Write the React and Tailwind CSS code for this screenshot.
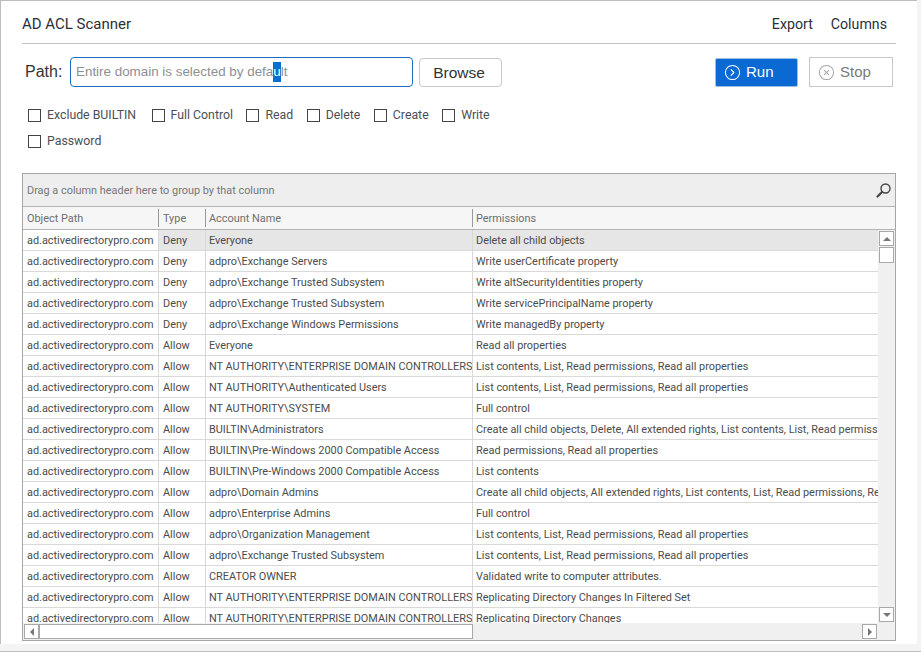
import React from 'react';
import { CircleChevronRight, CircleX } from 'lucide-react';

const ENT = 'NT AUTHORITY\\ENTERPRISE DOMAIN CONTROLLERS';
const STD = 'List contents, List, Read permissions, Read all properties';

const rows = [
  ['Deny', 'Everyone', 'Delete all child objects'],
  ['Deny', 'adpro\\Exchange Servers', 'Write userCertificate property'],
  ['Deny', 'adpro\\Exchange Trusted Subsystem', 'Write altSecurityIdentities property'],
  ['Deny', 'adpro\\Exchange Trusted Subsystem', 'Write servicePrincipalName property'],
  ['Deny', 'adpro\\Exchange Windows Permissions', 'Write managedBy property'],
  ['Allow', 'Everyone', 'Read all properties'],
  ['Allow', ENT, STD],
  ['Allow', 'NT AUTHORITY\\Authenticated Users', STD],
  ['Allow', 'NT AUTHORITY\\SYSTEM', 'Full control'],
  ['Allow', 'BUILTIN\\Administrators', 'Create all child objects, Delete, All extended rights, List contents, List, Read permissions, Read all properties'],
  ['Allow', 'BUILTIN\\Pre-Windows 2000 Compatible Access', 'Read permissions, Read all properties'],
  ['Allow', 'BUILTIN\\Pre-Windows 2000 Compatible Access', 'List contents'],
  ['Allow', 'adpro\\Domain Admins', 'Create all child objects, All extended rights, List contents, List, Read permissions, Read all properties'],
  ['Allow', 'adpro\\Enterprise Admins', 'Full control'],
  ['Allow', 'adpro\\Organization Management', STD],
  ['Allow', 'adpro\\Exchange Trusted Subsystem', STD],
  ['Allow', 'CREATOR OWNER', 'Validated write to computer attributes.'],
  ['Allow', ENT, 'Replicating Directory Changes In Filtered Set'],
  ['Allow', ENT, 'Replicating Directory Changes'],
];

const checks = ['Exclude BUILTIN', 'Full Control', 'Read', 'Delete', 'Create', 'Write', 'Password'];

function Check({ label }) {
  return (
    <label className="flex items-center gap-[6px] h-[14px] first:mr-[2px] text-[12.3px] text-[#4a4f55]">
      <span className="w-[13px] h-[13px] border border-[#444] bg-white" />
      {label}
    </label>
  );
}

function Arrow({ dir }) {
  const shape = {
    up: 'border-x-[4px] border-x-transparent border-b-[4px] border-b-[#777]',
    down: 'border-x-[4px] border-x-transparent border-t-[4px] border-t-[#777]',
    left: 'border-y-[4px] border-y-transparent border-r-[4px] border-r-[#777]',
    right: 'border-y-[4px] border-y-transparent border-l-[4px] border-l-[#777]',
  }[dir];
  return (
    <div className="w-[15px] h-[15px] shrink-0 bg-white border border-[#a8a8a8] flex items-center justify-center">
      <span className={`w-0 h-0 ${shape}`} />
    </div>
  );
}

function Row({ row, selected }) {
  const sel = selected ? 'bg-[#e6e6e6]' : '';
  return (
    <div className="grid grid-cols-[136px_47px_267px_1fr] h-[21px] border-b border-[#d9d9d9] text-[#4c4c4c] leading-[21px] whitespace-nowrap">
      <div className="pl-[4px] border-r border-[#d9d9d9] overflow-hidden">ad.activedirectorypro.com</div>
      <div className={`pl-[4px] border-r border-[#d9d9d9] overflow-hidden ${sel}`}>{row[0]}</div>
      <div className={`pl-[3px] border-r border-[#d9d9d9] overflow-hidden ${sel}`}>{row[1]}</div>
      <div className={`pl-[3px] overflow-hidden ${sel}`}>{row[2]}</div>
    </div>
  );
}

export default function App() {
  return (
    <div className="w-[921px] h-[652px] bg-[#f4f4f4] border-b border-[#bdbdbd] overflow-hidden font-['Roboto',sans-serif]">
      <div className="w-[917px] h-[644px] bg-white border-l border-t border-[#bdbdbd] pl-[21px] pt-[10px] flex flex-col">
        <div className="w-[874px] h-[33px] shrink-0 border-b border-[#c4c4c4] flex items-start justify-between pt-[3px] pr-[9px] text-[15px] leading-[20px] text-[#2b2f36]">
          <span>AD ACL Scanner</span>
          <div className="flex gap-[18px] text-[14.2px]">
            <span>Export</span>
            <span>Columns</span>
          </div>
        </div>

        <div className="flex items-center h-[30px] mt-[13px] w-[871px] shrink-0 font-['Liberation_Sans',sans-serif]">
          <span className="w-[48px] pl-[3px] text-[16px] text-[#333]">Path:</span>
          <div className="w-[343px] h-[30px] border border-[#1b6ec2] rounded-[4px] pl-[5px] flex items-center text-[13.4px] text-[#8c8f94] whitespace-nowrap">
            Entire domain is selected by defa<span className="bg-[#0a6fd0] text-white">u</span>lt
          </div>
          <button className="ml-[6px] w-[83px] h-[29px] border border-[#c8c8c8] rounded-[4px] pr-[3px] pt-[1px] text-[15.5px] text-[#333]">Browse</button>
          <button className="ml-auto w-[83px] h-[29px] bg-[#0b69d4] border border-[#9dbfe6] rounded-[2px] text-white text-[15px] flex items-center pl-[8px] gap-[5px]">
            <CircleChevronRight size={17} strokeWidth={1.5} />
            Run
          </button>
          <button className="ml-[11px] w-[84px] h-[30px] border border-[#c8c8c8] text-[#7a7a7a] text-[15px] flex items-center pl-[8px] gap-[5px]">
            <CircleX size={17} strokeWidth={1.5} className="text-[#a8a8a8]" />
            Stop
          </button>
        </div>

        <div className="flex flex-wrap gap-x-[13.5px] gap-y-[12px] w-[490px] ml-[6px] mt-[21px] shrink-0">
          {checks.map(c => <Check key={c} label={c} />)}
        </div>

        <div className="w-[874px] h-[468px] mt-[25px] shrink-0 border border-[#a6a6a6] flex flex-col text-[10.9px]">
          <div className="h-[33px] shrink-0 bg-[#eeeeee] border-b border-[#b4b4b4] flex items-center justify-between pl-[4px] pr-[3px] text-[#777]">
            <span className="pt-[3px]">Drag a column header here to group by that column</span>
            <svg width="17" height="17" viewBox="0 0 17 17" fill="none" stroke="#444" strokeLinecap="round">
              <circle cx="10.5" cy="6.5" r="4.5" strokeWidth="1.4" />
              <path d="M7 10 L2.5 14.5" strokeWidth="2.2" />
            </svg>
          </div>
          <div className="h-[23px] shrink-0 bg-[#f6f6f6] border-b border-[#b4b4b4] grid grid-cols-[136px_47px_267px_1fr] items-center text-[#6f6f6f] whitespace-nowrap">
            <div className="pl-[4px] h-[18px] leading-[20px] border-r border-[#999]">Object Path</div>
            <div className="pl-[4px] h-[18px] leading-[20px] border-r border-[#999]">Type</div>
            <div className="pl-[3px] h-[18px] leading-[20px] border-r border-[#999]">Account Name</div>
            <div className="pl-[3px] h-[18px] leading-[20px]">Permissions</div>
          </div>
          <div className="flex flex-1 min-h-0">
            <div className="flex-1 min-w-0 overflow-hidden">
              {rows.map((r, i) => <Row key={i} row={r} selected={i === 0} />)}
            </div>
            <div className="w-[17px] shrink-0 bg-[#f0f0f0] flex flex-col items-center py-[1px]">
              <Arrow dir="up" />
              <div className="w-[15px] h-[16px] mt-[1px] bg-white border border-[#a8a8a8]" />
              <div className="flex-1" />
              <Arrow dir="down" />
            </div>
          </div>
          <div className="h-[17px] shrink-0 bg-[#f0f0f0] flex items-center">
            <div className="w-[854px] flex items-center pl-[1px]">
              <Arrow dir="left" />
              <div className="w-[434px] h-[15px] bg-white border border-[#a8a8a8]" />
              <div className="flex-1" />
              <Arrow dir="right" />
            </div>
          </div>
        </div>
      </div>
    </div>
  );
}
